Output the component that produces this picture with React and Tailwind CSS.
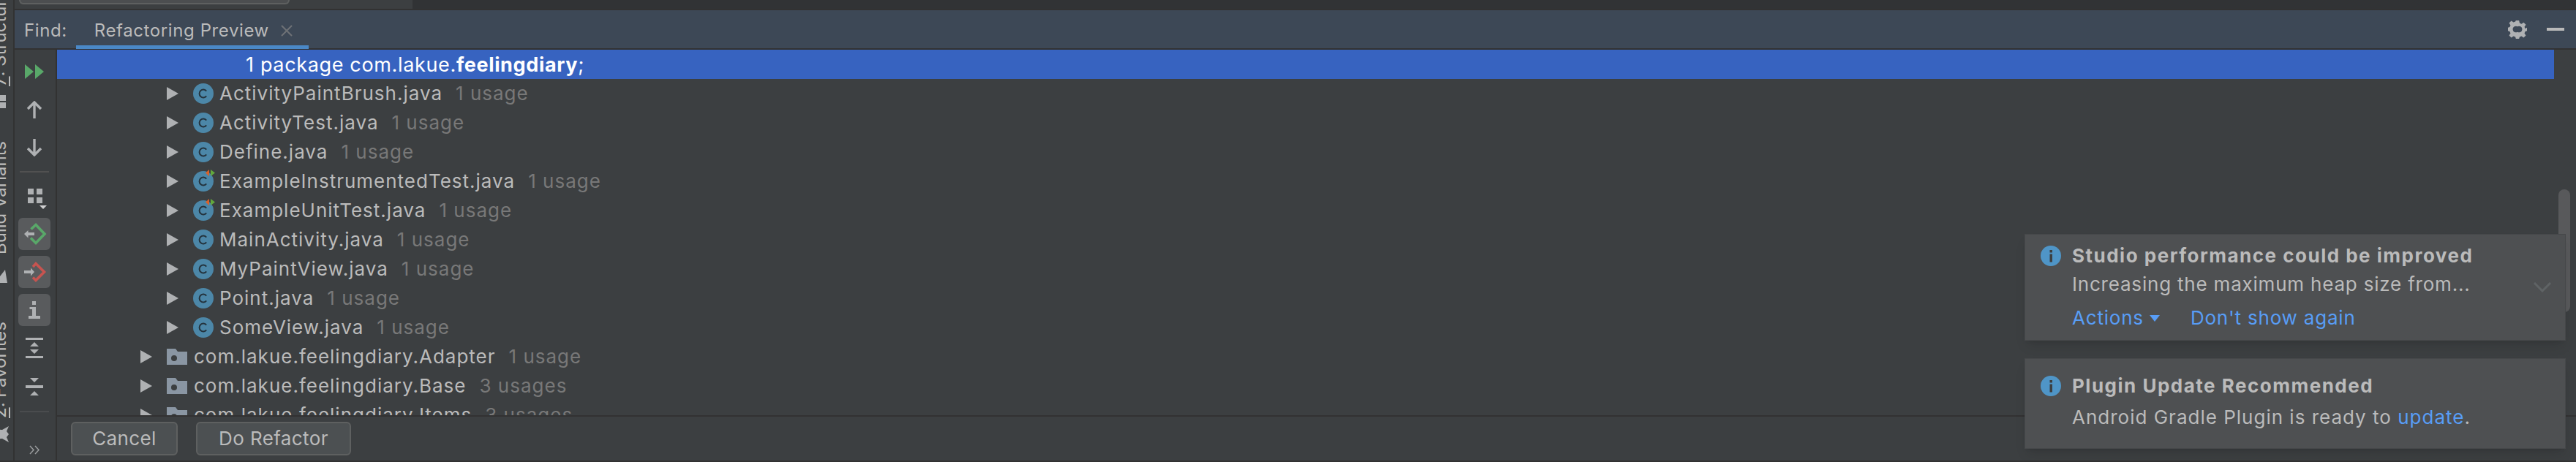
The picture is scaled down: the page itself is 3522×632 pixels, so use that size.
const FONT = "font-['Inter',sans-serif]";

const files = [
  ['ActivityPaintBrush.java', '1 usage'],
  ['ActivityTest.java', '1 usage'],
  ['Define.java', '1 usage'],
  ['ExampleInstrumentedTest.java', '1 usage', true],
  ['ExampleUnitTest.java', '1 usage', true],
  ['MainActivity.java', '1 usage'],
  ['MyPaintView.java', '1 usage'],
  ['Point.java', '1 usage'],
  ['SomeView.java', '1 usage'],
];

const packages = [
  ['com.lakue.feelingdiary.Adapter', '1 usage'],
  ['com.lakue.feelingdiary.Base', '3 usages'],
  ['com.lakue.feelingdiary.Items', '3 usages'],
];

function Triangle() {
  return (
    <svg width="16" height="18" viewBox="0 0 16 18" className="shrink-0">
      <path d="M0 0L16 9L0 18Z" fill="#afb1b3" />
    </svg>
  );
}

function ClassIcon({ test }) {
  return (
    <svg width="30" height="34" viewBox="0 0 30 34" className="shrink-0 -mt-1.5">
      <circle cx="14" cy="20" r="14" fill="#4c87a8" />
      <path d="M18.2 16.6A5.4 5.4 0 1 0 18.2 23.4" fill="none" stroke="#24333d" strokeWidth="2" />
      {test && (
        <g>
          <path d="M22 4L17 8.5L22 13Z" fill="#d9622b" />
          <path d="M24 4L30 8.5L24 13Z" fill="#62a83c" />
        </g>
      )}
    </svg>
  );
}

function FolderIcon() {
  return (
    <svg width="28" height="22" viewBox="0 0 28 22" className="shrink-0">
      <path d="M0 0H12L15 4H28V22H0Z" fill="#8a96a3" />
      <circle cx="10" cy="13" r="4" fill="#3c3f41" />
    </svg>
  );
}

function Usage({ children }) {
  return <span className="ml-[18px] text-[#787878]">{children}</span>;
}

function FileRow({ name, usage, test }) {
  return (
    <div className="h-10 shrink-0 flex items-center pl-[150px]">
      <Triangle />
      <div className="w-5 shrink-0" />
      <ClassIcon test={test} />
      <span className="ml-1.5">{name}</span>
      <Usage>{usage}</Usage>
    </div>
  );
}

function PackageRow({ name, usage }) {
  return (
    <div className="h-10 shrink-0 flex items-center pl-[114px]">
      <Triangle />
      <div className="w-5 shrink-0" />
      <FolderIcon />
      <span className="ml-[9px]">{name}</span>
      <Usage>{usage}</Usage>
    </div>
  );
}

function ToggleButton({ children }) {
  return <div className="w-11 h-11 rounded-md bg-[#595b5d]">{children}</div>;
}

function LeftToolbar() {
  return (
    <div className="w-[58px] shrink-0 border-r-2 border-[#323232] flex flex-col items-center pr-0.5">
      <svg width="26" height="20" viewBox="0 0 26 20" className="mt-5 shrink-0">
        <path d="M0 0L12 10L0 20Z M14 0L26 10L14 20Z" fill="#59a869" />
      </svg>
      <svg width="20" height="24" viewBox="0 0 20 24" className="mt-[30px] shrink-0">
        <path d="M10 2V24 M1 11L10 2L19 11" fill="none" stroke="#afb1b3" strokeWidth="3.4" />
      </svg>
      <svg width="20" height="24" viewBox="0 0 20 24" className="mt-7 shrink-0">
        <path d="M10 0V22 M1 13L10 22L19 13" fill="none" stroke="#afb1b3" strokeWidth="3.4" />
      </svg>
      <div className="w-10 h-0.5 bg-[#515151] mt-5 shrink-0" />
      <svg width="26" height="28" viewBox="0 0 26 28" className="mt-[22px] ml-2 shrink-0">
        <path d="M0 0H8V8H0Z M12 0H20V8H12Z M0 12H8V20H0Z M12 12H20V20H12Z" fill="#afb1b3" />
        <path d="M16 23H26L21 28Z" fill="#cfd0d1" />
      </svg>
      <div className="flex flex-col gap-2 mt-3 shrink-0">
        <ToggleButton>
          <svg width="44" height="44" viewBox="0 0 44 44">
            <path d="M17.5 15.5L24 9.5L36 22L24 34.5L17 27.5" fill="none" stroke="#59a869" strokeWidth="3.6" />
            <path d="M8 22L13.5 17V20H22V24H13.5V27.5Z" fill="#afb1b3" />
          </svg>
        </ToggleButton>
        <ToggleButton>
          <svg width="44" height="44" viewBox="0 0 44 44">
            <path d="M20 15L24 10.5L35.5 22L24 33.5L20 29.5" fill="none" stroke="#c75450" strokeWidth="3.6" />
            <path d="M22 22L17 16.5V20H8V24H17V27.5Z" fill="#afb1b3" />
          </svg>
        </ToggleButton>
        <ToggleButton>
          <svg width="44" height="44" viewBox="0 0 44 44">
            <path d="M19 10H24V15H19Z M15.5 18H24V30H30V34H14V30H19V21H15.5Z" fill="#afb1b3" />
          </svg>
        </ToggleButton>
      </div>
      <svg width="24" height="28" viewBox="0 0 24 28" className="mt-4 shrink-0">
        <path d="M0 0H24V3H0Z M0 25H24V28H0Z M12 6L18 12H6Z M6 16H18L12 22Z" fill="#afb1b3" />
      </svg>
      <svg width="24" height="26" viewBox="0 0 24 26" className="mt-[26px] shrink-0">
        <path d="M0 11H24V15H0Z M6 1H18L12 7Z M12 19L18 25H6Z" fill="#afb1b3" />
      </svg>
      <div className="w-10 h-0.5 bg-[#4a4c4e] mt-5 shrink-0" />
      <svg width="14" height="13" viewBox="0 0 14 13" className="mt-[45px] shrink-0">
        <path d="M1 1L6 6.5L1 12 M8 1L13 6.5L8 12" fill="none" stroke="#9a9c9e" strokeWidth="1.5" />
      </svg>
    </div>
  );
}

function StripeLabel({ children, className }) {
  return (
    <span className={`[writing-mode:vertical-rl] rotate-180 whitespace-nowrap text-[24px] tracking-normal leading-none text-[#bbbbbb] shrink-0 ${className}`}>
      {children}
    </span>
  );
}

function LeftStripe() {
  return (
    <div className="w-5 shrink-0 border-r-2 border-[#323232] flex flex-col items-start overflow-hidden h-full">
      <StripeLabel className="-ml-3 -mt-3 h-[130px]">
        <span className="underline">7</span>: Structure
      </StripeLabel>
      <div className="flex flex-col gap-0.5 mt-3 shrink-0">
        <div className="h-2 w-2 bg-[#afb1b3]" />
        <div className="h-2 w-2 bg-[#afb1b3]" />
      </div>
      <StripeLabel className="-ml-3 mt-[30px] h-[170px]">Build Variants</StripeLabel>
      <svg width="10" height="18" viewBox="0 0 10 18" className="mt-[21px] shrink-0">
        <path d="M0 18V9L7 0L8 6L10 18Z" fill="#afb1b3" />
      </svg>
      <StripeLabel className="-ml-3 mt-[45px] h-[140px]">
        <span className="underline">2</span>: Favorites
      </StripeLabel>
      <svg width="12" height="22" viewBox="0 0 12 22" className="mt-[11px] shrink-0">
        <path d="M12 0L9 7L12 11L9 15L12 22L3 17L-8 18L-3 11L-8 4L3 5Z" fill="#afb1b3" />
      </svg>
    </div>
  );
}

function InfoIcon() {
  return (
    <svg width="28" height="28" viewBox="0 0 28 28" className="shrink-0">
      <circle cx="14" cy="14" r="14" fill="#4f95c7" />
      <rect x="12.5" y="6" width="3.5" height="3.5" fill="#3c3f41" />
      <rect x="12.5" y="11.5" width="3.5" height="11" fill="#3c3f41" />
    </svg>
  );
}

function Notifications() {
  return (
    <div className="absolute left-[2768px] top-[320px] w-[740px] flex flex-col gap-6 text-[26px] tracking-[0.8px]">
      <div className="h-[146px] bg-[#4e5052] border border-[#46484a] shadow-lg relative">
        <div className="flex items-center gap-[15px] pl-[21px] pt-[15px]">
          <InfoIcon />
          <span className="font-bold tracking-[1.5px]">Studio performance could be improved</span>
        </div>
        <div className="pl-[64px] mt-3 h-[26px]">Increasing the maximum heap size from...</div>
        <div className="pl-[64px] mt-5 flex items-center text-[#589df6]">
          <span>Actions</span>
          <svg width="14" height="9" viewBox="0 0 14 9" className="ml-2">
            <path d="M0 0H14L7 9Z" fill="#589df6" />
          </svg>
          <span className="ml-[42px]">Don't show again</span>
        </div>
        <svg width="26" height="14" viewBox="0 0 26 14" className="absolute right-[18px] top-[65px]">
          <path d="M2 1L13 12L24 1" fill="none" stroke="#5f6365" strokeWidth="3" />
        </svg>
      </div>
      <div className="h-[124px] bg-[#4e5052] border border-[#46484a] shadow-lg">
        <div className="flex items-center gap-[15px] pl-[21px] pt-[23px]">
          <InfoIcon />
          <span className="font-bold tracking-[1.5px]">Plugin Update Recommended</span>
        </div>
        <div className="pl-[64px] mt-4 tracking-[1px]">
          Android Gradle Plugin is ready to <span className="text-[#589df6]">update</span>.
        </div>
      </div>
    </div>
  );
}

export default function App() {
  return (
    <div className={`relative w-[3522px] h-[632px] overflow-hidden bg-[#3c3f41] text-[#bbbbbb] text-[26px] tracking-[1px] leading-none ${FONT}`}>
      <div className="flex h-[630px] border-b-2 border-[#323232] box-content">
        <LeftStripe />
        <div className="flex-1 flex flex-col min-w-0">
          <div className="h-[14px] shrink-0 flex border-b-2 border-[#323232]">
            <div className="w-[544px] shrink-0 pl-1.5">
              <div className="w-[370px] h-[6px] bg-[#4c4e50] border-2 border-t-0 border-[#5e6060] rounded-b-lg" />
            </div>
            <div className="flex-1 bg-[#313335]" />
          </div>
          <div className="h-[54px] shrink-0 bg-[#3d4856] border-b-2 border-[#323232] flex items-center relative text-[24px] tracking-[0.6px] pt-1">
            <span className="ml-[13px]">Find:</span>
            <div className="absolute left-[84px] w-[318px] bottom-[-1px] h-[5px] bg-[#4a88c7]" />
            <span className="ml-[37px]">Refactoring Preview</span>
            <svg width="16" height="16" viewBox="0 0 16 16" className="ml-4">
              <path d="M1 1L15 15M15 1L1 15" stroke="#6e7276" strokeWidth="2" />
            </svg>
            <svg width="26" height="26" viewBox="0 0 24 24" className="absolute left-[3409px] top-[13px]" fill="#afb1b3">
              <path fillRule="evenodd" d="M10 1H14L14.7 4.2L17 5.2L19.8 3.4L22.6 6.2L20.8 9L21.8 11.2L24 10V14L21.8 14.8L20.8 17L22.6 19.8L19.8 22.6L17 20.8L14.7 21.8L14 24H10L9.3 21.8L7 20.8L4.2 22.6L1.4 19.8L3.2 17L2.2 14.8L0 14V10L2.2 9.2L3.2 7L1.4 4.2L4.2 1.4L7 3.2L9.3 2.2Z M12 8.5A4 4 0 1 0 12 15.5A4 4 0 1 0 12 8.5Z" />
            </svg>
            <div className="absolute left-[3462px] top-6 w-6 h-1 bg-[#b9b9b9]" />
          </div>
          <div className="flex-1 flex min-h-0">
            <LeftToolbar />
            <div className="flex-1 flex flex-col min-w-0">
              <div className="flex-1 flex flex-col min-h-0 overflow-hidden">
                <div className="h-10 shrink-0 bg-[#3763c0] mr-[30px] text-white flex items-center pl-[258px] text-[27px] tracking-[0.65px]">
                  <span>1 package com.lakue.<b>feelingdiary</b>;</span>
                </div>
                {files.map(([name, usage, test]) => (
                  <FileRow key={name} name={name} usage={usage} test={test} />
                ))}
                {packages.map(([name, usage]) => (
                  <PackageRow key={name} name={name} usage={usage} />
                ))}
              </div>
              <div className="h-[62px] shrink-0 border-t-2 border-[#323232] flex items-center pl-[19px] gap-[25px] tracking-[0.4px]">
                <button className="w-[146px] h-[46px] rounded-md border-2 border-[#5e6060] bg-[#4c5052] text-[#bbbbbb]">Cancel</button>
                <button className="w-[212px] h-[46px] rounded-md border-2 border-[#5e6060] bg-[#4c5052] text-[#bbbbbb]">Do Refactor</button>
              </div>
            </div>
          </div>
        </div>
      </div>
      <div className="absolute left-[3498px] top-[259px] w-4 h-[168px] bg-[#58595b] rounded-full" />
      <Notifications />
    </div>
  );
}
